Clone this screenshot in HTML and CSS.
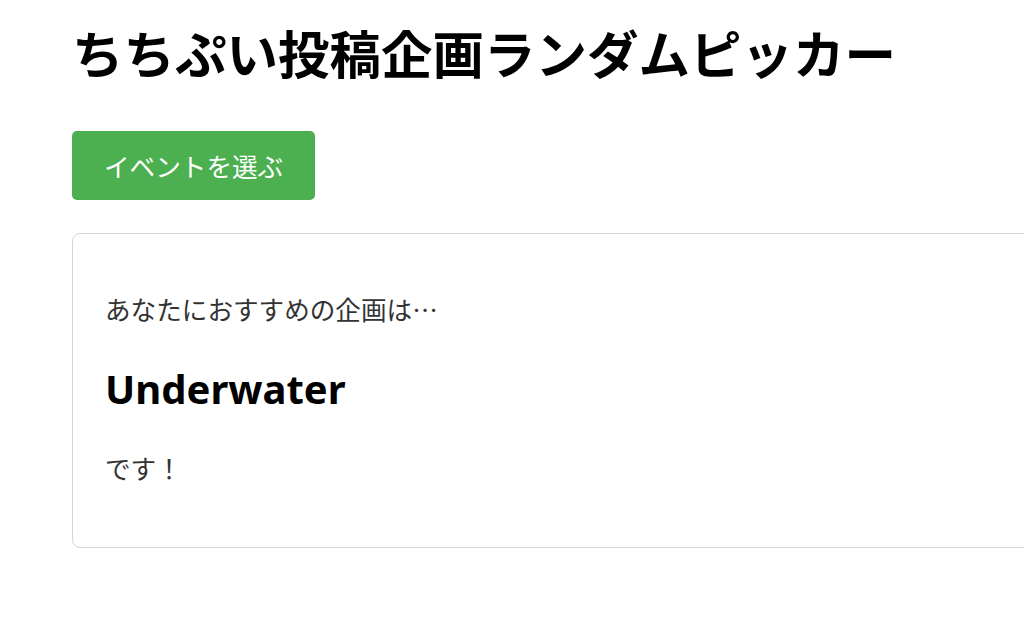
FILE: index.html
```html
<!DOCTYPE html>
<html lang="ja">

<head>
    <meta charset="UTF-8">
    <meta name="viewport" content="width=device-width, initial-scale=1.0">
    <title>ちちぷい投稿企画ランダムピッカー</title>
    <link rel="stylesheet" href="styles.css">
</head>

<body>
    <div id="container">
        <h1 id="pageTitle">ちちぷい投稿企画ランダムピッカー</h1>

        <button id="pickButton" onclick="pickEvent()">イベントを選ぶ</button>

        <!-- Result card -->
        <div id="result" class="result-card">
            <p>あなたにおすすめの企画は…</p>
            <h2 id="eventName">Underwater</h2>
            <p>です！</p>
        </div>
    </div>

    <script>
        const events = ['Underwater'];

        function pickEvent() {
            const name = events[Math.floor(Math.random() * events.length)];
            document.getElementById('eventName').textContent = name;
        }
    </script>
</body>

</html>
```

FILE: styles.css
```css
html,
body {
  overflow-x: hidden;
}

body {
  margin: 0;
  font-family: "Noto Sans", "Noto Sans CJK JP", sans-serif;
  color: #333;
  background-color: #fff;
}

#container {
  padding: 0 0 40px 72px;
}

#pageTitle {
  margin: 16px 0 38px;
  font-size: 51.5px;
  line-height: 77px;
  font-weight: bold;
  color: #000;
  letter-spacing: 0;
}

#pickButton {
  display: block;
  height: 69px;
  padding: 0 32px;
  background-color: #4CAF50;
  color: white;
  border: none;
  border-radius: 5px;
  font-family: "Noto Sans CJK JP", sans-serif;
  font-size: 25.6px;
  white-space: nowrap;
  cursor: pointer;
}

.result-card {
  margin-top: 33px;
  width: 1040px;
  padding: 30px 32px 35px;
  border: 1px solid #d6d6d6;
  border-radius: 8px;
}

.result-card p {
  margin: 25.6px 0;
  font-size: 25.6px;
  line-height: 38px;
  font-family: "Noto Sans CJK JP", sans-serif;
  color: #333;
}

.result-card h2 {
  margin: 32px 0;
  font-size: 40px;
  line-height: 57px;
  font-weight: bold;
  color: #000;
}
```
